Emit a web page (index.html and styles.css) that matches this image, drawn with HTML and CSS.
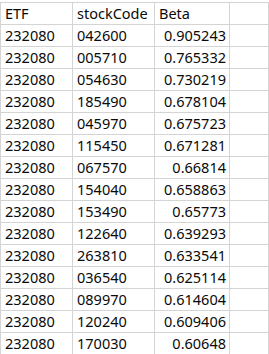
FILE: index.html
```html
<!DOCTYPE html>
<html>
<head>
<meta charset="utf-8">
<link rel="stylesheet" href="styles.css">
</head>
<body>
<div class="sheet">
  <div class="row"><div class="cell">ETF</div><div class="cell">stockCode</div><div class="cell">Beta</div><div class="cell"></div></div>
  <div class="row"><div class="cell">232080</div><div class="cell">042600</div><div class="cell num">0.905243</div><div class="cell"></div></div>
  <div class="row"><div class="cell">232080</div><div class="cell">005710</div><div class="cell num">0.765332</div><div class="cell"></div></div>
  <div class="row"><div class="cell">232080</div><div class="cell">054630</div><div class="cell num">0.730219</div><div class="cell"></div></div>
  <div class="row"><div class="cell">232080</div><div class="cell">185490</div><div class="cell num">0.678104</div><div class="cell"></div></div>
  <div class="row"><div class="cell">232080</div><div class="cell">045970</div><div class="cell num">0.675723</div><div class="cell"></div></div>
  <div class="row"><div class="cell">232080</div><div class="cell">115450</div><div class="cell num">0.671281</div><div class="cell"></div></div>
  <div class="row"><div class="cell">232080</div><div class="cell">067570</div><div class="cell num">0.66814</div><div class="cell"></div></div>
  <div class="row"><div class="cell">232080</div><div class="cell">154040</div><div class="cell num">0.658863</div><div class="cell"></div></div>
  <div class="row"><div class="cell">232080</div><div class="cell">153490</div><div class="cell num">0.65773</div><div class="cell"></div></div>
  <div class="row"><div class="cell">232080</div><div class="cell">122640</div><div class="cell num">0.639293</div><div class="cell"></div></div>
  <div class="row"><div class="cell">232080</div><div class="cell">263810</div><div class="cell num">0.633541</div><div class="cell"></div></div>
  <div class="row"><div class="cell">232080</div><div class="cell">036540</div><div class="cell num">0.625114</div><div class="cell"></div></div>
  <div class="row"><div class="cell">232080</div><div class="cell">089970</div><div class="cell num">0.614604</div><div class="cell"></div></div>
  <div class="row"><div class="cell">232080</div><div class="cell">120240</div><div class="cell num">0.609406</div><div class="cell"></div></div>
  <div class="row"><div class="cell">232080</div><div class="cell">170030</div><div class="cell num">0.60648</div><div class="cell"></div></div>
</div>
</body>
</html>
```
FILE: styles.css
```css
html, body {
  margin: 0;
  padding: 0;
  background: #ffffff;
}
body {
  overflow: hidden;
}
.sheet {
  margin-top: 2px;
  border-top: 1px solid #d4d4d4;
  border-left: 1px solid #d4d4d4;
  font-family: "Noto Sans", "Open Sans", sans-serif;
  font-size: 14.5px;
  color: #0a0a0a;
}
.row {
  display: grid;
  grid-template-columns: 72px 82px 75px 1fr;
  height: 22px;
}
.cell {
  border-right: 1px solid #d4d4d4;
  border-bottom: 1px solid #d4d4d4;
  padding: 0 3px 0 4px;
  line-height: 20px;
  white-space: nowrap;
  overflow: hidden;
}
.num {
  text-align: right;
  padding-right: 3px;
}
```
